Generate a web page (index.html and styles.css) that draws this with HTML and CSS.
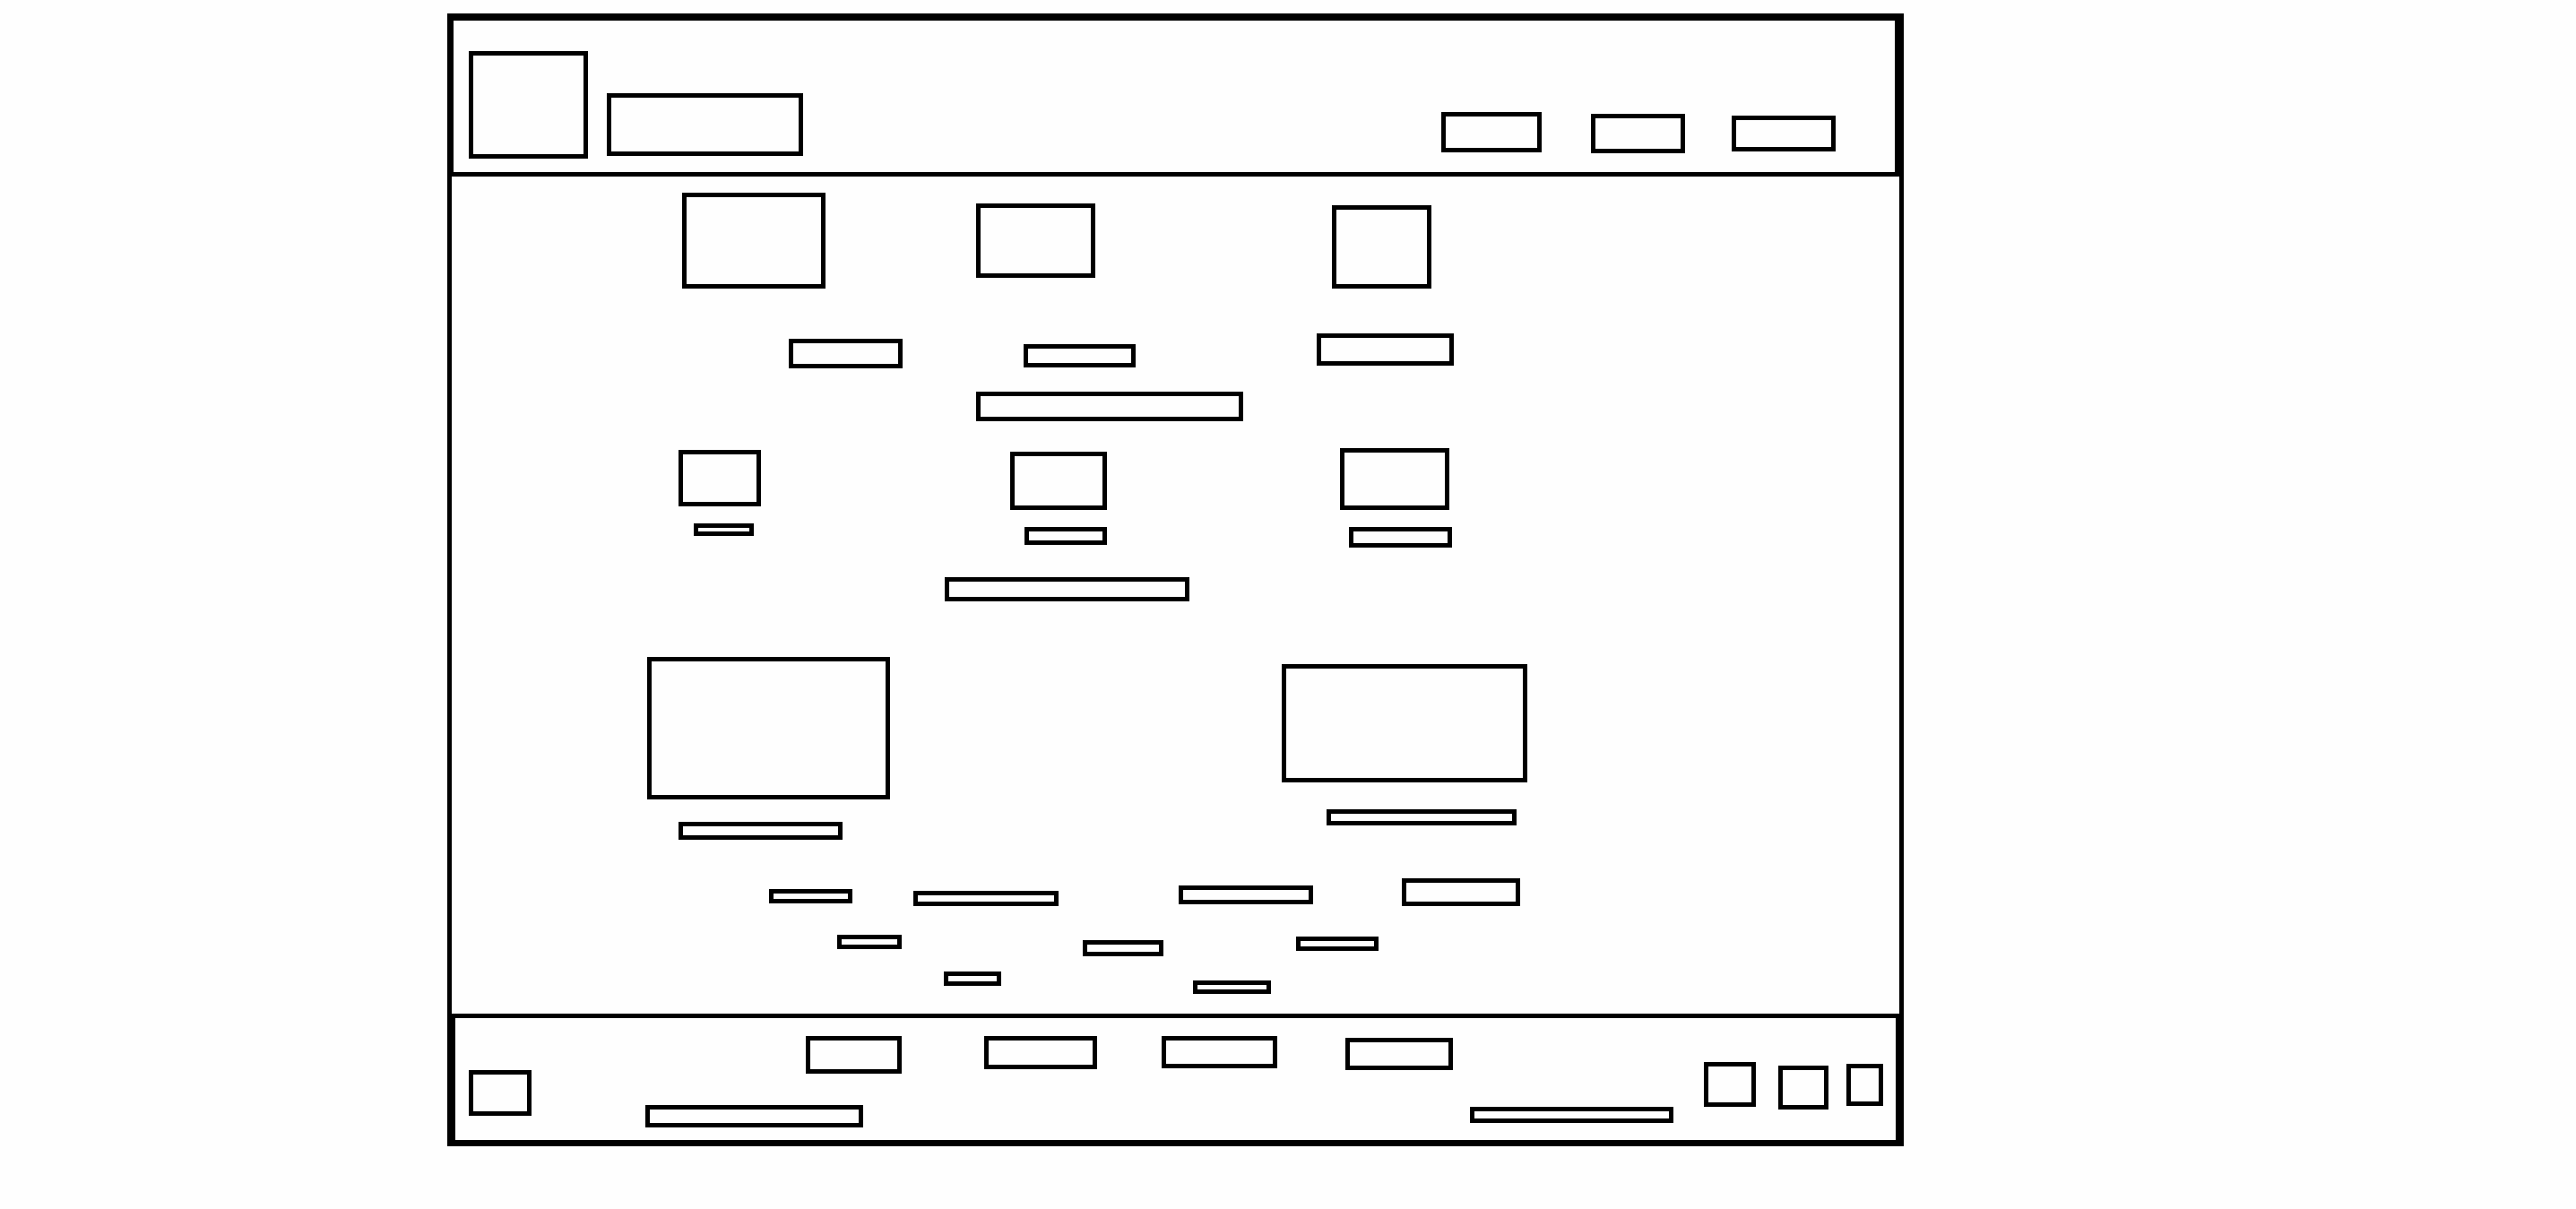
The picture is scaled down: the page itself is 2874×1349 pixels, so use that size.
FILE: index.html
```html
<!DOCTYPE html>
<html lang="en">
<head>
<meta charset="utf-8">
<meta name="viewport" content="width=device-width, initial-scale=1">
<title>Wireframe</title>
<link rel="stylesheet" href="styles.css">
</head>
<body>
<div class="frame">
  <header class="header">
    <div class="box logo"></div>
    <div class="box site-name"></div>
    <nav class="menu">
      <div class="box"></div>
      <div class="box drop-1"></div>
      <div class="box drop-2"></div>
    </nav>
  </header>

  <main class="main">
    <div class="row cards">
      <div class="box"></div>
      <div class="box drop-6"></div>
      <div class="box drop-7"></div>
    </div>
    <div class="row card-labels">
      <div class="box drop-3"></div>
      <div class="box drop-6"></div>
      <div class="box"></div>
    </div>
    <div class="row heading-one">
      <div class="box"></div>
    </div>
    <div class="row thumbs">
      <div class="box drop-1"></div>
      <div class="box drop-2"></div>
      <div class="box"></div>
    </div>
    <div class="row thumb-labels">
      <div class="box"></div>
      <div class="box drop-2"></div>
      <div class="box drop-2"></div>
    </div>
    <div class="row heading-two">
      <div class="box"></div>
    </div>
    <div class="row panels">
      <div class="box"></div>
      <div class="box drop-4"></div>
    </div>
    <div class="row panel-labels">
      <div class="box drop-7"></div>
      <div class="box"></div>
    </div>
    <div class="row tags-top">
      <div class="box drop-6"></div>
      <div class="box drop-7"></div>
      <div class="box drop-4"></div>
      <div class="box"></div>
    </div>
    <div class="row tags-middle">
      <div class="box"></div>
      <div class="box drop-3"></div>
      <div class="box drop-1"></div>
    </div>
    <div class="row tags-bottom">
      <div class="box"></div>
      <div class="box drop-5"></div>
    </div>
  </main>

  <footer class="footer">
    <div class="box footer-logo"></div>
    <div class="footer-body">
      <nav class="row footer-links">
        <div class="box"></div>
        <div class="box"></div>
        <div class="box"></div>
        <div class="box drop-1"></div>
      </nav>
      <div class="footer-notes">
        <div class="box"></div>
        <div class="box drop-1"></div>
      </div>
    </div>
    <div class="social">
      <div class="box"></div>
      <div class="box drop-2"></div>
      <div class="box drop-1"></div>
    </div>
  </footer>
</div>
</body>
</html>
```
FILE: styles.css
```css
:root {
  --ink: #000;
  --paper: #fefefe;
  --line: 5px;
  --step: 2px;
}

* {
  box-sizing: border-box;
}

body {
  margin: 0;
  padding: 15px 0;
  display: grid;
  grid-template-columns: 499fr 1625fr 750fr;
  background: var(--paper);
  font-family: "Liberation Sans", Arial, sans-serif;
}

.frame {
  grid-column: 2;
}

.box {
  border: var(--line) solid var(--ink);
}

/* Staggered boxes sit a number of steps below the top of their row */
.drop-1 { margin-top: calc(var(--step) * 1); }
.drop-2 { margin-top: calc(var(--step) * 2); }
.drop-3 { margin-top: calc(var(--step) * 3); }
.drop-4 { margin-top: calc(var(--step) * 4); }
.drop-5 { margin-top: calc(var(--step) * 5); }
.drop-6 { margin-top: calc(var(--step) * 6); }
.drop-7 { margin-top: calc(var(--step) * 7); }

/* Rows alternate spacer and box tracks, so boxes take the even columns */
.row {
  display: grid;
  align-items: start;
}

.row > :nth-child(1) { grid-column: 2; }
.row > :nth-child(2) { grid-column: 4; }
.row > :nth-child(3) { grid-column: 6; }
.row > :nth-child(4) { grid-column: 8; }

/* Header */
.header {
  display: grid;
  grid-template-columns: 17fr 133fr 21fr 219fr 712fr 440fr 66fr;
  align-items: start;
  padding: 34px 0 15px;
  border: solid var(--ink);
  border-width: 8px 10px 5px 7px;
}

.logo {
  grid-column: 2;
  height: 120px;
}

.site-name {
  grid-column: 4;
  height: 70px;
  margin-top: 47px;
}

.menu {
  grid-column: 6;
  display: grid;
  grid-template-columns: 112fr 55fr 105fr 52fr 116fr;
  align-items: start;
  margin-top: 68px;
}

.menu > :nth-child(1) { height: 45px; }
.menu > :nth-child(2) { grid-column: 3; height: 44px; }
.menu > :nth-child(3) { grid-column: 5; height: 40px; }

/* Main */
.main {
  display: flex;
  flex-direction: column;
  padding: 18px 0 22px;
  border: solid var(--ink);
  border-width: 0 5px;
}

.cards { grid-template-columns: 257fr 160fr 168fr 133fr 264fr 111fr 522fr; }
.cards > :nth-child(1) { height: 107px; }
.cards > :nth-child(2) { height: 83px; }
.cards > :nth-child(3) { height: 93px; }

.card-labels {
  grid-template-columns: 376fr 127fr 135fr 125fr 202fr 153fr 497fr;
  margin-top: 50px;
}
.card-labels > :nth-child(1) { height: 33px; }
.card-labels > :nth-child(2) { height: 26px; }
.card-labels > :nth-child(3) { height: 36px; }

.heading-one {
  grid-template-columns: 585fr 298fr 732fr;
  margin-top: 26px;
}
.heading-one > .box { height: 33px; }

.thumbs {
  grid-template-columns: 253fr 92fr 278fr 108fr 260fr 122fr 502fr;
  margin-top: 30px;
}
.thumbs > :nth-child(1) { height: 63px; }
.thumbs > :nth-child(2) { height: 65px; }
.thumbs > :nth-child(3) { height: 69px; }

.thumb-labels {
  grid-template-columns: 270fr 67fr 302fr 92fr 270fr 115fr 499fr;
  margin-top: 15px;
}
.thumb-labels > :nth-child(1) { height: 14px; }
.thumb-labels > :nth-child(2) { height: 20px; }
.thumb-labels > :nth-child(3) { height: 23px; }

.heading-two {
  grid-template-columns: 550fr 273fr 792fr;
  margin-top: 33px;
}
.heading-two > .box { height: 27px; }

.panels {
  grid-template-columns: 218fr 271fr 437fr 274fr 415fr;
  margin-top: 62px;
}
.panels > :nth-child(1) { height: 159px; }
.panels > :nth-child(2) { height: 132px; }

.panel-labels {
  grid-template-columns: 253fr 183fr 540fr 212fr 427fr;
  margin-top: 11px;
}
.panel-labels > :nth-child(1) { height: 20px; }
.panel-labels > :nth-child(2) { height: 18px; }

.tags-top {
  grid-template-columns: 354fr 93fr 68fr 162fr 134fr 150fr 99fr 132fr 423fr;
  margin-top: 43px;
}
.tags-top > :nth-child(1) { height: 16px; }
.tags-top > :nth-child(2) { height: 17px; }
.tags-top > :nth-child(3) { height: 21px; }
.tags-top > :nth-child(4) { height: 31px; }

.tags-middle {
  grid-template-columns: 430fr 72fr 202fr 90fr 148fr 92fr 581fr;
  margin-top: 32px;
}
.tags-middle > :nth-child(1) { height: 16px; }
.tags-middle > :nth-child(2) { height: 18px; }
.tags-middle > :nth-child(3) { height: 16px; }

.tags-bottom {
  grid-template-columns: 549fr 64fr 214fr 87fr 701fr;
  margin-top: 17px;
}
.tags-bottom > :nth-child(1) { height: 16px; }
.tags-bottom > :nth-child(2) { height: 15px; }

/* Footer */
.footer {
  display: grid;
  grid-template-columns: 15fr 70fr 127fr 1147fr 34fr 200fr 14fr;
  align-items: start;
  padding: 20px 0 14px;
  border: solid var(--ink);
  border-width: 5px 9px 7px;
}

.footer-logo {
  grid-column: 2;
  height: 51px;
  margin-top: 38px;
}

.footer-body {
  grid-column: 4;
  display: flex;
  flex-direction: column;
  gap: 35px;
}

.footer-links { grid-template-columns: 179fr 107fr 92fr 126fr 72fr 129fr 76fr 120fr 246fr; }
.footer-links > :nth-child(1) { height: 42px; }
.footer-links > :nth-child(2) { height: 37px; }
.footer-links > :nth-child(3) { height: 36px; }
.footer-links > :nth-child(4) { height: 36px; }

.footer-notes {
  display: grid;
  grid-template-columns: 243fr 677fr 227fr;
  align-items: start;
}
.footer-notes > :nth-child(1) { height: 25px; }
.footer-notes > :nth-child(2) { grid-column: 3; height: 18px; }

.social {
  grid-column: 6;
  display: grid;
  grid-template-columns: 58fr 25fr 56fr 20fr 41fr;
  align-items: start;
  margin-top: 29px;
}
.social > :nth-child(1) { height: 50px; }
.social > :nth-child(2) { grid-column: 3; height: 49px; }
.social > :nth-child(3) { grid-column: 5; height: 47px; }
```
